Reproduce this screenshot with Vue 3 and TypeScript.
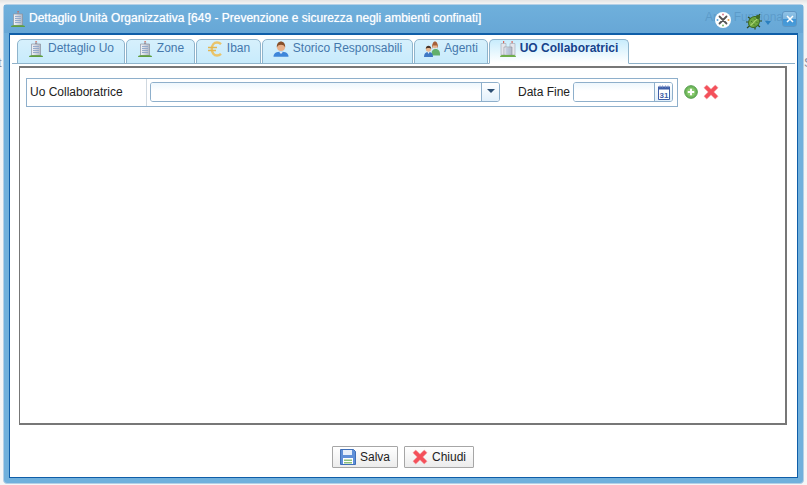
<script setup lang="ts">
interface Tab { label: string; icon: string; width: number; active?: boolean }
const tabs: Tab[] = [
  { label: 'Dettaglio Uo', icon: 'building', width: 108 },
  { label: 'Zone', icon: 'building', width: 69 },
  { label: 'Iban', icon: 'euro', width: 65 },
  { label: 'Storico Responsabili', icon: 'person', width: 151 },
  { label: 'Agenti', icon: 'agents', width: 74 },
  { label: 'UO Collaboratrici', icon: 'buildings', width: 140, active: true },
]
</script>

<template>
  <div class="page">
    <svg class="defs" width="0" height="0" aria-hidden="true">
      <defs>
        <linearGradient id="bld" x1="0" y1="0" x2="1" y2="0">
          <stop offset="0" stop-color="#f2f4f8" /><stop offset="1" stop-color="#b0b6c4" />
        </linearGradient>
        <symbol id="i-building" viewBox="0 0 16 16">
          <path d="M7.500 0h1.200v1.500H7.500z" fill="#d05a4a" />
          <path d="M7 1.500h2.200v1.500H7z" fill="#9a9aa4" />
          <path d="M3.500 3h9v11.500h-9z" fill="url(#bld)" stroke="#8a909e" stroke-width=".7" />
          <path d="M5 5.500h6M5 7.500h6M5 9.500h6M5 11.500h6" stroke="#94aacb" stroke-width="1" />
          <path d="M1 16c0-1 .8-1.800 2.500-1.800h9c1.700 0 2.500.8 2.500 1.800z" fill="#5f9f3e" />
        </symbol>
        <symbol id="i-euro" viewBox="0 0 16 16">
          <path d="M14 3.200C12.800 2 11.500 1.500 10 1.500 7 1.500 4.800 4 4.800 8s2.200 6.500 5.200 6.500c1.500 0 2.800-.5 4-1.700" fill="none" stroke="#eac46a" stroke-width="2.400" />
          <path d="M1 6.500h9M1 9.500h8" stroke="#e3b650" stroke-width="1.500" />
        </symbol>
        <symbol id="i-person" viewBox="0 0 16 16">
          <path d="M.5 15.800c0-3.700 3-5 7.500-5s7.500 1.300 7.500 5z" fill="#3f86da" />
          <path d="M6 10.800l2 2.200 2-2.200z" fill="#e6eefa" />
          <circle cx="8" cy="6" r="4" fill="#e8b08a" />
          <path d="M3.800 6.500C3.500 2.500 5.800.5 8 .5s4.500 2 4.200 6c-.8-2-2.500-2.700-4.200-2.700S4.600 4.500 3.800 6.500z" fill="#87502a" />
        </symbol>
        <symbol id="i-agents" viewBox="0 0 16 16">
          <path d="M7.500 13c0-3.500 1.500-5 4-5s4.500 1.500 4.500 5v1.500H7.500z" fill="#62b06c" />
          <circle cx="11" cy="4.500" r="2.700" fill="#e8b48d" />
          <path d="M8 8c0-5 1-7.500 3-7.500S14 3 14 8l-1-3.500H9z" fill="#a5603a" />
          <path d="M0 16c0-3.500 1.500-5 4.500-5S9 12.500 9 16z" fill="#3f78c4" />
          <path d="M3.500 11l1 2 1-2z" fill="#e6eefa" />
          <circle cx="4.500" cy="8" r="2.700" fill="#eab78f" />
          <path d="M1.800 8C1.800 6 3 4.800 4.500 4.800S7.200 6 7.200 8c-1-1.200-4.400-1.200-5.400 0z" fill="#4a3528" />
        </symbol>
        <symbol id="i-buildings" viewBox="0 0 16 16">
          <path d="M3 0h1.200v2.500H3zM11.500 0h1.200v2.500h-1.200z" fill="#d8665c" />
          <path d="M1 2.500h5v11.500H1zM10 2.500h5v11.500h-5z" fill="#e4e6ec" stroke="#a0a6b2" stroke-width=".6" />
          <path d="M4 6h8v8H4z" fill="url(#bld)" stroke="#8a909e" stroke-width=".6" />
          <path d="M5.500 8h5M5.500 10h5M5.500 12h5" stroke="#a8bad6" />
          <path d="M0 16c0-1.300 1-2 2-2h12c1 0 2 .7 2 2z" fill="#6fae4c" />
        </symbol>
        <symbol id="i-cross" viewBox="0 0 16 16">
          <path d="M3.500 1.200Q4 1 4.500 1.700L8 5.200l3.500-3.500q.5-.7 1-.5l2.300 2.300q.2.5-.5 1L10.800 8l3.500 3.500q.7.5.5 1l-2.300 2.300q-.5.2-1-.5L8 10.800l-3.500 3.500q-.5.7-1 .5L1.200 12.500q-.2-.5.5-1L5.200 8 1.700 4.500Q1 4 1.200 3.500z" fill="#f4505a" stroke="#f0969a" stroke-width=".6" />
        </symbol>
      </defs>
    </svg>

    <span class="behind-left">t</span>
    <span class="behind-right">S</span>

    <section class="window">
      <header class="titlebar">
        <svg class="title-icon" width="16" height="16"><use href="#i-building" /></svg>
        <span class="title-text">Dettaglio Unità Organizzativa [649 - Prevenzione e sicurezza negli ambienti confinati]</span>
        <span class="ghost">Area Funzionale</span>
        <div class="tools">
          <svg class="logo" width="18" height="18" viewBox="0 0 18 18">
            <circle cx="9" cy="9" r="8" fill="#fff" />
            <path d="M5.500 5.500l7 7M12.500 5.500l-7 7" stroke="#555" stroke-width="1.800" stroke-linecap="round" />
            <circle cx="3.500" cy="9" r="1" fill="#5aa6dc" />
            <circle cx="14.500" cy="9" r="1" fill="#e8a24a" />
            <circle cx="9" cy="3.500" r="1" fill="#d87a8c" />
            <circle cx="9" cy="14.500" r="1" fill="#7cbb6c" />
          </svg>
          <svg class="bug" width="18" height="18" viewBox="0 0 18 18">
            <path d="M3 5l3 2M15 2l-2 3M1 10h3M2 16l3-2.500M17 9h-3M10 17.500V15M15 15l-2.500-2" stroke="#2e4a1c" stroke-width="1.200" />
            <ellipse cx="9" cy="10" rx="6" ry="5" transform="rotate(-45 9 10)" fill="#6ea83e" stroke="#3e6a26" />
            <path d="M5.500 13.500L12.500 6.500" stroke="#a6cf72" stroke-width="1.200" />
            <path d="M6 9l1.500 1.500M9 6.500l1.500 1.500M8.500 12l1.500 1.500M11 9.500l1.500 1.500" stroke="#3e6a26" stroke-width=".8" />
            <circle cx="13" cy="5" r="2.200" fill="#3e6a26" />
          </svg>
          <span class="caret"></span>
          <button class="close" aria-label="Chiudi finestra">
            <svg width="8" height="8" viewBox="0 0 8 8"><path d="M1 1l6 6M7 1L1 7" stroke="#fff" stroke-width="1.500" /></svg>
          </button>
        </div>
      </header>

      <div class="body">
        <nav class="tabstrip">
          <div
            v-for="tab in tabs"
            :key="tab.label"
            class="tab"
            :class="{ active: tab.active }"
            :style="{ width: tab.width + 'px' }"
          >
            <svg width="16" height="16"><use :href="'#i-' + tab.icon" /></svg>
            <span>{{ tab.label }}</span>
          </div>
        </nav>

        <main class="panel">
          <div class="form-line">
            <div class="form-row">
              <label class="cell-label">Uo Collaboratrice</label>
              <div class="cell-fields">
                <div class="combo">
                  <div class="input"></div>
                  <div class="trigger"><span class="arrow"></span></div>
                </div>
                <label class="date-label">Data Fine</label>
                <div class="date">
                  <div class="input"></div>
                  <div class="trigger">
                    <svg width="14" height="15" viewBox="0 0 14 15">
                      <path d="M1.500 2.500h11v12h-11z" fill="#fff" stroke="#3f5fa8" />
                      <path d="M1 1.500h12v3H1z" fill="#3f5fa8" />
                      <path d="M3 .5v2M5.500.5v2M8.500.5v2M11 .5v2" stroke="#7d93c8" />
                      <text x="7" y="12.500" text-anchor="middle" class="cal-text">31</text>
                    </svg>
                  </div>
                </div>
              </div>
            </div>
            <svg class="add" width="14" height="14" viewBox="0 0 14 14">
              <circle cx="7" cy="7" r="6.300" fill="#72b85c" stroke="#4e9a48" />
              <circle cx="7" cy="7" r="4" fill="#8ccc72" />
              <path d="M7 3.800v6.400M3.800 7h6.400" stroke="#fff" stroke-width="2" />
            </svg>
            <svg class="del" width="16" height="16"><use href="#i-cross" /></svg>
          </div>
        </main>

        <footer class="buttons">
          <button class="btn salva">
            <svg width="16" height="16" viewBox="0 0 16 16">
              <path d="M.5.500h13l2 2v13H.5z" fill="#5f8fd8" stroke="#3f6fb8" />
              <path d="M3 1h9v5H3z" fill="#e6eefa" />
              <path d="M3 9h10v6H3z" fill="#fff" />
              <path d="M4 10.500h8v1.500H4zM4 13h8v1.500H4z" fill="#8cc07a" />
            </svg>
            <span>Salva</span>
          </button>
          <button class="btn chiudi">
            <svg width="16" height="16"><use href="#i-cross" /></svg>
            <span>Chiudi</span>
          </button>
        </footer>
      </div>
    </section>
  </div>
</template>

<style scoped>
.page {
  position: relative;
  width: 807px;
  height: 485px;
  box-sizing: border-box;
  padding: 4px 3px 1px;
  overflow: hidden;
  background: linear-gradient(#e4e4e4 0, #f4f4f4 4px, #f6f6f6 100%);
  font-family: "Liberation Sans", Arial, sans-serif;
  font-size: 12px;
  color: #222;
}
.defs { position: absolute; }
.behind-left, .behind-right {
  position: absolute;
  top: 55px;
  font-size: 13px;
  color: #8d8a9c;
}
.behind-left { left: -2px; }
.behind-right { left: 804px; }
.window {
  position: relative;
  box-sizing: border-box;
  width: 801px;
  height: 480px;
  display: flex;
  flex-direction: column;
  border: 1px solid #b4cfe6;
  border-radius: 4px;
  padding: 0 5px 5px;
  background: #70b0dc;
}
.titlebar {
  position: relative;
  flex: none;
  box-sizing: border-box;
  height: 28px;
  display: flex;
  align-items: center;
  background: linear-gradient(#6fb0dc, #67a7d6);
  margin: 0 -5px;
  padding: 0 5px 2px 6px;
}
.title-icon { flex: none; margin-top: 2px; }
.title-text {
  margin-left: 3px;
  color: #fff;
  white-space: nowrap;
  text-shadow: 0 0 1px rgba(255, 255, 255, .7);
}
.ghost {
  position: absolute;
  left: 701px;
  top: 5px;
  font-size: 12px;
  color: rgba(40, 100, 150, .25);
  white-space: nowrap;
}
.tools {
  position: absolute;
  left: 710px;
  top: 5px;
  display: flex;
  align-items: center;
}
.bug { margin-left: 13px; margin-top: 2px; }
.caret {
  width: 0;
  height: 0;
  margin: 6px 0 0 2px;
  border: 3.500px solid transparent;
  border-top: 4px solid #2a7fc0;
  border-bottom: 0;
}
.close {
  box-sizing: border-box;
  width: 15px;
  height: 16px;
  padding: 0;
  margin-left: 11px;
  margin-top: -2px;
  display: flex;
  align-items: center;
  justify-content: center;
  border: 1px solid #5e96c4;
  border-radius: 3px;
  background: linear-gradient(#8fc2e6 0, #7ab4de 50%, #3f94d6 51%, #4a9cd8 100%);
}
.body {
  flex: 1;
  min-height: 0;
  display: flex;
  flex-direction: column;
  background: #fff;
  border: 1px solid #0f5ea8;
  border-top-width: 2px;
}
.tabstrip {
  flex: none;
  height: 29px;
  box-sizing: border-box;
  display: flex;
  align-items: flex-end;
  gap: 1px;
  margin: 0 2px;
  padding-left: 5px;
  border-bottom: 1px solid #8eb0c8;
}
.tab {
  box-sizing: border-box;
  height: 25px;
  margin-bottom: -1px;
  display: flex;
  align-items: center;
  justify-content: center;
  gap: 4px;
  padding-bottom: 7px;
  border: 1px solid #8fb4cc;
  border-radius: 5px 5px 0 0;
  background: linear-gradient(#d6f0fc, #c8ebfc);
  color: #4578ac;
  white-space: nowrap;
}
.tab svg { margin-top: 2px; }
.tab.active {
  border-bottom-color: #fff;
  background: linear-gradient(#c8ecfc, #eaf8fe 60%, #fff);
  color: #15428b;
  font-weight: bold;
}
.panel {
  flex: none;
  box-sizing: border-box;
  width: 768px;
  height: 359px;
  margin: 2px 0 0 9px;
  padding: 10px 6px 0;
  border: solid #777;
  border-width: 2px 2px 2px 1px;
  background: #fff;
}
.form-line { display: flex; align-items: center; }
.form-row {
  box-sizing: border-box;
  width: 652px;
  height: 29px;
  display: flex;
  border: 1px solid #8eafcb;
}
.cell-label {
  box-sizing: border-box;
  width: 120px;
  padding-left: 3px;
  border-right: 1px solid #cfd8e0;
  line-height: 26px;
}
.cell-fields {
  flex: 1;
  display: flex;
  align-items: center;
  padding: 0 0 1px 3px;
}
.combo, .date {
  box-sizing: border-box;
  height: 20px;
  display: flex;
  border: 1px solid #8eafcb;
  border-radius: 3px;
  overflow: hidden;
}
.combo { width: 350px; }
.date { width: 100px; margin-left: 3px; }
.input {
  flex: 1;
  background: linear-gradient(#eef7fd, #fff 8px);
}
.combo .trigger, .date .trigger {
  flex: none;
  width: 17px;
  display: flex;
  align-items: center;
  justify-content: center;
  border-left: 1px solid #8eafcb;
  background: linear-gradient(#fff, #e2f0fb);
}
.arrow {
  width: 0;
  height: 0;
  margin-top: -2px;
  border: 4px solid transparent;
  border-top: 4px solid #2d4f74;
  border-bottom: 0;
}
.date-label { margin-left: 18px; }
.cal-text {
  font-family: "Liberation Sans", Arial, sans-serif;
  font-size: 8px;
  font-weight: bold;
  fill: #3f5fa8;
}
.add { margin: -1px 0 0 6px; }
.del { margin: -1px 0 0 5px; }
.buttons {
  flex: 1;
  display: flex;
  justify-content: center;
  align-items: flex-start;
  gap: 6px;
  padding: 21px 1px 0 0;
}
.btn {
  box-sizing: border-box;
  height: 22px;
  display: flex;
  align-items: center;
  justify-content: center;
  gap: 4px;
  padding: 0;
  border: 1px solid #a6a6a6;
  border-radius: 1px;
  background: linear-gradient(#fff, #ececec);
  font: 12px "Liberation Sans", Arial, sans-serif;
  color: #222;
}
.salva { width: 66px; }
.chiudi { width: 70px; }
</style>

<style>
html, body { margin: 0; background: #f6f6f6; }
</style>
